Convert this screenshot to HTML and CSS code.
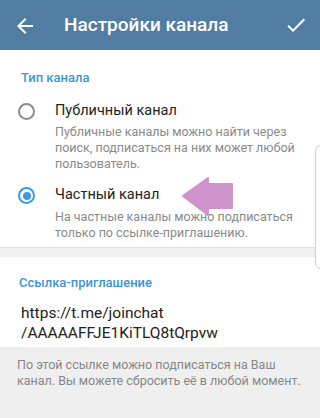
FILE: index.html
```html
<!DOCTYPE html>
<html lang="ru">
<head>
<meta charset="utf-8">
<title>Настройки канала</title>
<link rel="stylesheet" href="styles.css">
</head>
<body>
<div class="page">
  <header class="topbar">
    <svg class="icon back" viewBox="0 0 24 24" width="24" height="24"><path fill="#fff" d="M20 11H7.83l5.59-5.59L12 4l-8 8 8 8 1.41-1.41L7.83 13H20v-2z"/></svg>
    <div class="title">Настройки канала</div>
    <svg class="icon check" viewBox="0 0 24 24" width="24" height="24"><path fill="#fff" d="M9 16.17L4.83 12l-1.42 1.41L9 19 21 7l-1.41-1.41z"/></svg>
  </header>

  <section class="card type-card">
    <div class="label">Тип канала</div>
    <div class="option">
      <span class="radio"></span>
      <div class="opt-body">
        <div class="opt-title">Публичный канал</div>
        <div class="opt-desc">Публичные каналы можно найти через поиск, подписаться на них может любой пользователь.</div>
      </div>
    </div>
    <div class="option second">
      <span class="radio checked"></span>
      <div class="opt-body">
        <div class="opt-title">Частный канал</div>
        <div class="opt-desc">На частные каналы можно подписаться только по ссылке-приглашению.</div>
      </div>
    </div>
  </section>

  <div class="band"></div>

  <section class="card link-card">
    <div class="label">Ссылка-приглашение</div>
    <div class="link">https://t.me/joinchat<br>/AAAAAFFJE1KiTLQ8tQrpvw</div>
  </section>

  <div class="footer">По этой ссылке можно подписаться на Ваш канал. Вы можете сбросить её в любой момент.</div>

  <svg class="pointer" viewBox="0 0 55 45" width="55" height="45"><polygon points="3,21 28,3 28,9 52,9 52,33 28,33 28,40" fill="#cf94cb" stroke="#cf94cb" stroke-width="2" stroke-linejoin="round"/></svg>
  <div class="edge"></div>
</div>
</body>
</html>
```

FILE: styles.css
```css
html, body {
  margin: 0;
  padding: 0;
  background: #efefef;
}
.page {
  position: relative;
  width: 320px;
  height: 418px;
  overflow: hidden;
  font-family: Roboto, "Noto Sans", sans-serif;
  background: #efefef;
}
.topbar {
  height: 50px;
  background: #517da2;
  display: flex;
  align-items: center;
  color: #fff;
}
.icon {
  display: block;
  flex: none;
}
.back {
  margin-left: 13px;
  margin-top: 2px;
}
.title {
  margin-left: 27px;
  font-size: 19px;
  font-weight: 500;
  flex: 1;
  margin-top: -1px;
}
.check {
  margin-right: 12px;
  margin-top: -1px;
}
.card {
  background: #fff;
}
.type-card {
  padding: 20px 0 6px;
}
.label {
  padding-left: 21px;
  font-size: 13px;
  font-weight: 500;
  line-height: 16px;
  color: #3d95d6;
}
.option {
  display: flex;
  align-items: flex-start;
  margin-top: 15px;
}
.option.second {
  margin-top: 13px;
}
.radio {
  flex: none;
  box-sizing: border-box;
  width: 17px;
  height: 17px;
  border: 2px solid #8c8c8c;
  border-radius: 50%;
  margin: 2px 20px 0 18px;
  position: relative;
}
.radio.checked {
  border-color: #3a9ae6;
}
.radio.checked::after {
  content: "";
  position: absolute;
  left: 2.5px;
  top: 2.5px;
  width: 8px;
  height: 8px;
  border-radius: 50%;
  background: #3a9ae6;
}
.opt-body {
  flex: 1;
  padding-right: 20px;
}
.opt-title {
  font-size: 14.5px;
  line-height: 20px;
  color: #222;
}
.opt-desc {
  margin-top: 3px;
  font-size: 12.5px;
  line-height: 16px;
  color: #8a8a8a;
}
.second .opt-desc {
  margin-top: 4px;
}
.band {
  height: 10px;
  box-sizing: border-box;
  border-top: 1px solid #e2e2e2;
  background: #f0f0f0;
}
.link-card {
  padding: 18px 0 4px;
}
.link-card .label {
  padding-left: 19px;
}
.link {
  margin-top: 12px;
  padding-left: 21px;
  font-size: 15.5px;
  line-height: 20px;
  color: #222;
}
.footer {
  padding: 10px 12px 0 17px;
  font-size: 12.5px;
  line-height: 16px;
  color: #888;
}
.pointer {
  position: absolute;
  left: 180px;
  top: 175px;
}
.edge {
  position: absolute;
  left: 315px;
  top: 145px;
  width: 20px;
  height: 122px;
  border: 1px solid #cfcfcf;
  border-radius: 6px;
  background: #fff;
}
```
